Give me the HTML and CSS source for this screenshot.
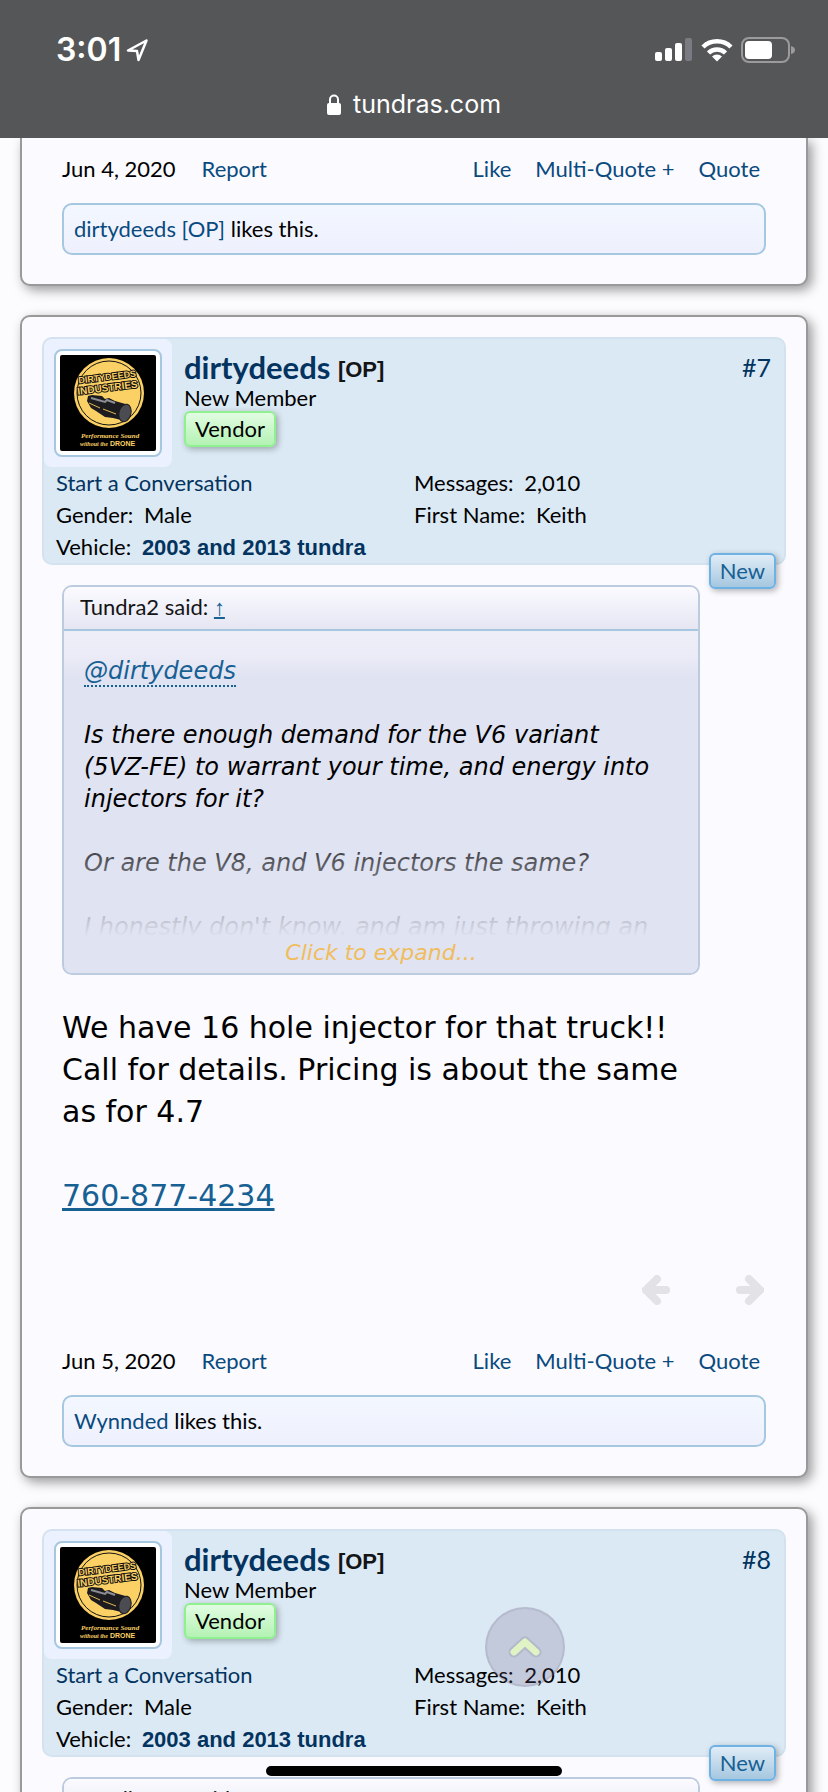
FILE: index.html
```html
<!DOCTYPE html>
<html lang="en">
<head>
    <meta charset="UTF-8">
    <meta name="viewport" content="width=device-width, initial-scale=1.0">
    <title>tundras.com</title>
    <link rel="stylesheet" href="styles.css">
</head>
<body>
    <svg class="sprite" width="0" height="0" aria-hidden="true">
        <symbol id="logo" viewBox="0 0 96 96">
            <rect width="96" height="96" rx="2" fill="#000"/>
            <circle cx="49" cy="38" r="35" fill="#fbd065"/>
            <circle cx="49" cy="38" r="32" fill="none" stroke="#111" stroke-width="1"/>
            <g transform="rotate(-7 48 29)" font-family="Liberation Sans, sans-serif" font-weight="bold" text-anchor="middle" fill="#fbd065" stroke="#111" stroke-width="2" paint-order="stroke">
                <text x="48" y="25" font-size="9">DIRTYDEEDS</text>
                <text x="47" y="36" font-size="10">INDUSTRIES</text>
            </g>
            <path d="M28 41l4-1 10 1 3 3 4-1 6 3 14 4-4 16-12-3-8-1-9-6-5-3-4-7z" fill="#1c1c20"/>
            <path d="M31 43l14 4 2-2 8 3" fill="none" stroke="#8d8d94" stroke-width="2"/>
            <path d="M29 48l11 5M43 54l13 5" fill="none" stroke="#e0b84e" stroke-width="1"/>
            <ellipse cx="65" cy="58" rx="6" ry="9" transform="rotate(14 65 58)" fill="#4b4b52" stroke="#1c1c20"/>
            <g font-family="Liberation Serif, serif" font-style="italic" font-weight="bold" fill="#fbd065">
                <text x="21" y="83" font-size="7">Performance Sound</text>
                <text x="20" y="91" font-size="6">without the</text>
            </g>
            <text x="50" y="91" font-family="Liberation Sans, sans-serif" font-weight="bold" font-size="7" fill="#fbd065">DRONE</text>
        </symbol>
    </svg>

    <header class="browser-bar">
        <div class="status">
            <div class="clock">
                <span>3:01</span>
                <svg width="24" height="24" viewBox="0 0 24 24" fill="none" stroke="#fff" stroke-width="2.500" stroke-linejoin="round"><path d="M21.500 2.500L3 12.500l9 .5 1.500 9z"/></svg>
            </div>
            <div class="signals">
                <svg width="38" height="24" viewBox="0 0 38 24" fill="#fff">
                    <rect x="0" y="14" width="7" height="9" rx="2"/>
                    <rect x="10" y="10" width="7" height="13" rx="2"/>
                    <rect x="20" y="5" width="7" height="18" rx="2"/>
                    <rect x="30" y="0" width="7" height="23" rx="2" fill="#7a7a82"/>
                </svg>
                <svg width="32" height="24" viewBox="0 0 32 24" fill="none" stroke="#fff" stroke-width="4.500">
                    <path d="M2 9a20 20 0 0 1 28 0"/>
                    <path d="M7.500 15a12 12 0 0 1 17 0"/>
                    <path d="M16 23.500l-5-5a7 7 0 0 1 10 0z" fill="#fff" stroke="none"/>
                </svg>
                <svg width="54" height="26" viewBox="0 0 54 26">
                    <rect x="1" y="1" width="47" height="24" rx="7" fill="none" stroke="#9b9b9e" stroke-width="2"/>
                    <rect x="4" y="4" width="27" height="18" rx="4" fill="#fff"/>
                    <path d="M50 9q4 1 4 4t-4 4z" fill="#9b9b9e"/>
                </svg>
            </div>
        </div>
        <div class="address">
            <svg width="14" height="21" viewBox="0 0 14 21"><rect y="9" width="14" height="12" rx="2" fill="#fff"/><path d="M3 10V5.500a4 4 0 0 1 8 0V10" fill="none" stroke="#fff" stroke-width="2"/></svg>
            <span>tundras.com</span>
        </div>
    </header>

    <main class="thread">
        <article class="post post-cut">
            <footer class="post-meta">
                <span>Jun 4, 2020</span>
                <a href="#">Report</a>
                <nav class="post-actions">
                    <a href="#">Like</a>
                    <a href="#">Multi-Quote +</a>
                    <a href="#">Quote</a>
                </nav>
            </footer>
            <div class="likes"><a href="#">dirtydeeds [OP]</a> likes this.</div>
        </article>

        <article class="post">
            <section class="user">
                <div class="user-top">
                    <div class="avatar"><a href="#"><svg width="96" height="96"><use href="#logo"/></svg></a></div>
                    <div class="who">
                        <h3><a href="#">dirtydeeds</a> <b>[OP]</b></h3>
                        <div class="rank">New Member</div>
                        <span class="vendor">Vendor</span>
                    </div>
                    <a class="number" href="#">#7</a>
                </div>
                <div class="user-info">
                    <div>
                        <p><a href="#">Start a Conversation</a></p>
                        <p>Gender: <span>Male</span></p>
                        <p>Vehicle: <span class="vehicle">2003 and 2013 tundra</span></p>
                    </div>
                    <div>
                        <p>Messages: <span>2,010</span></p>
                        <p>First Name: <span>Keith</span></p>
                    </div>
                </div>
                <strong class="new">New</strong>
            </section>

            <div class="content">
                <blockquote class="quote">
                    <div class="quote-head">Tundra2 said: <a href="#">↑</a></div>
                    <div class="quote-body">
                        <div class="quote-text">
                            <p><a href="#">@dirtydeeds</a></p>
                            <p>Is there enough demand for the V6 variant <span class="engine">(5VZ-FE)</span> to warrant your time, and energy into injectors for it?</p>
                            <p>Or are the V8, and V6 injectors the same?</p>
                            <p>I honestly don't know, and am just throwing an</p>
                        </div>
                        <button class="expand" type="button">Click to expand...</button>
                    </div>
                </blockquote>
                <div class="message">
                    <p>We have 16 hole injector for that truck!! Call for details. Pricing is about the same as for 4.7</p>
                    <p><a href="#">760-877-4234</a></p>
                </div>
            </div>

            <div class="arrows">
                <a href="#" aria-label="Previous"><svg width="28" height="30" viewBox="0 0 28 30"><path d="M15 4L4 15l11 11M5 15h19" /></svg></a>
                <a href="#" aria-label="Next"><svg width="28" height="30" viewBox="0 0 28 30"><path d="M13 4l11 11-11 11M23 15H4"/></svg></a>
            </div>
            <footer class="post-meta">
                <span>Jun 5, 2020</span>
                <a href="#">Report</a>
                <nav class="post-actions">
                    <a href="#">Like</a>
                    <a href="#">Multi-Quote +</a>
                    <a href="#">Quote</a>
                </nav>
            </footer>
            <div class="likes"><a href="#">Wynnded</a> likes this.</div>
        </article>

        <article class="post">
            <section class="user">
                <div class="user-top">
                    <div class="avatar"><a href="#"><svg width="96" height="96"><use href="#logo"/></svg></a></div>
                    <div class="who">
                        <h3><a href="#">dirtydeeds</a> <b>[OP]</b></h3>
                        <div class="rank">New Member</div>
                        <span class="vendor">Vendor</span>
                    </div>
                    <a class="number" href="#">#8</a>
                </div>
                <div class="user-info">
                    <div>
                        <p><a href="#">Start a Conversation</a></p>
                        <p>Gender: <span>Male</span></p>
                        <p>Vehicle: <span class="vehicle">2003 and 2013 tundra</span></p>
                    </div>
                    <div>
                        <p>Messages: <span>2,010</span></p>
                        <p>First Name: <span>Keith</span></p>
                    </div>
                </div>
                <strong class="new">New</strong>
            </section>
            <div class="content">
                <blockquote class="quote">
                    <div class="quote-head">Rowllerons said:</div>
                </blockquote>
            </div>
        </article>
    </main>

    <button class="to-top" type="button" aria-label="Back to top">
        <svg width="34" height="26" viewBox="0 0 34 26" fill="none" stroke-linejoin="round" stroke-linecap="round">
            <path d="M6 18L17 8l11 10" stroke="#b4b8cb" stroke-width="11"/>
            <path d="M6 18L17 8l11 10" stroke="#dff3c4" stroke-width="7"/>
        </svg>
    </button>
    <div class="home-bar"></div>
</body>
</html>
```
FILE: styles.css
```css
* {
    box-sizing: border-box;
}
body {
    display: flex;
    flex-direction: column;
    height: 100vh;
    margin: 0;
    overflow: hidden;
    background: #fcfcff;
    color: #000;
    font-family: Lato, "Trebuchet MS", sans-serif;
    font-size: 22px;
    line-height: 32px;
}
h3, p, blockquote {
    margin: 0;
}
a {
    color: #0a4a7e;
    text-decoration: none;
}
svg {
    display: block;
}
.sprite {
    position: absolute;
}

/* browser bar */
.browser-bar {
    flex: none;
    height: 138px;
    padding-top: 30px;
    background: #555658;
    color: #fff;
    font-family: Inter, sans-serif;
}
.status {
    display: flex;
    justify-content: space-between;
    align-items: center;
    height: 40px;
    padding: 0 33px 0 56px;
}
.clock, .signals {
    display: flex;
    align-items: center;
    gap: 8px;
}
.clock {
    gap: 4px;
    font-size: 32px;
    font-weight: 600;
}
.address {
    display: flex;
    justify-content: center;
    align-items: center;
    gap: 12px;
    margin-top: 18px;
    font-size: 25px;
}

/* posts */
.thread {
    flex: 1;
    min-height: 0;
    overflow: hidden;
}
.post {
    margin: 0 20px 29px;
    padding: 20px 20px 29px;
    border: 2px solid #999;
    border-radius: 10px;
    background: #fafaff;
    box-shadow: 4px 4px 12px rgba(0, 0, 0, 0.4);
}
.post-cut {
    padding-top: 15px;
    border-top: 0;
    border-radius: 0 0 10px 10px;
}
.user {
    position: relative;
    height: 228px;
    border: 2px solid #d4e2ef;
    border-radius: 10px;
    background: #dbe9f4;
}
.user a {
    color: #03335f;
}
.user-top {
    display: flex;
    height: 128px;
}
.avatar {
    width: 128px;
    height: 128px;
    padding: 10px;
    border-radius: 8px;
    background: #ebf1ff;
}
.avatar a {
    display: block;
    padding: 4px;
    border: 2px solid #a5c7e0;
    border-radius: 8px;
    background: #fff;
}
.who {
    flex: 1;
    padding: 10px 0 0 12px;
}
.who h3 {
    font-size: 31px;
    line-height: 36px;
}
.who b {
    color: #141414;
    font: bold 22px "Liberation Sans", sans-serif;
    vertical-align: 2px;
}
.rank {
    line-height: 26px;
}
.vendor, .new {
    display: inline-block;
    height: 36px;
    padding: 0 9px;
    border: 2px solid #8ff08f;
    border-radius: 6px;
    background: linear-gradient(#e2fce2, #b4f2b4);
    box-shadow: 2px 2px 6px rgba(0, 0, 0, 0.3);
}
.new {
    position: absolute;
    right: 8px;
    bottom: -26px;
    border-color: #6cb2e4;
    background: linear-gradient(#e0ecf6, #a5c7e0);
    color: #176093;
    font-weight: normal;
}
.number {
    padding: 12px 13px 0 0;
    font-size: 25px;
}
.user-info {
    display: grid;
    grid-template-columns: 1fr 1fr;
}
.user-info > div {
    padding-left: 12px;
}
.user-info > div + div {
    padding-left: 0;
}
.user-info span {
    margin-left: 5px;
}
.user-info .vehicle {
    color: #03335f;
    font: bold 22px "Liberation Sans", sans-serif;
}

.content {
    padding: 20px 86px 0 20px;
}
.quote {
    border: 2px solid #bccbe0;
    border-radius: 10px;
    overflow: hidden;
    background: #e0e3f2;
}
.quote-head {
    height: 44px;
    padding: 4px 16px;
    border-bottom: 2px solid #a5c7e0;
    background: linear-gradient(#fafaff, #e6e6f3);
    color: #141414;
}
.quote-head a {
    color: #176093;
    font-family: "Liberation Serif", serif;
    text-decoration: underline;
}
.quote-body {
    padding: 24px 20px 4px;
    background: linear-gradient(#efeff8, #ebebf7 26px, #e0e3f2 46px);
    font-family: "DejaVu Sans", Verdana, sans-serif;
    font-style: italic;
}
.quote-text {
    position: relative;
    height: 282px;
    overflow: hidden;
    font-size: 24px;
}
.quote-text::after {
    content: "";
    position: absolute;
    inset: 160px 0 0;
    background: linear-gradient(rgba(224, 227, 242, 0), #e0e3f2);
}
.quote-text p {
    margin-bottom: 32px;
}
.quote-text p:last-child {
    margin-bottom: 0;
}
.quote-text a {
    border-bottom: 2px dotted #176093;
    color: #176093;
}
.engine {
    white-space: nowrap;
}
.expand {
    display: block;
    width: 100%;
    height: 32px;
    padding: 0;
    border: 0;
    background: none;
    color: #f0bd5c;
    font: inherit;
    text-align: center;
}
.message {
    padding-top: 32px;
    font-family: "DejaVu Sans", Verdana, sans-serif;
    font-size: 30px;
    line-height: 42px;
}
.message p + p {
    margin-top: 42px;
}
.message a {
    color: #176093;
    text-decoration: underline;
}
.arrows {
    display: flex;
    justify-content: flex-end;
    gap: 66px;
    margin: 58px 22px 40px 0;
}
.arrows path {
    fill: none;
    stroke: #e2e2e7;
    stroke-width: 8px;
    stroke-linecap: round;
}
.post-meta {
    display: flex;
    gap: 26px;
    margin: 0 26px 0 20px;
}
.post-actions {
    display: flex;
    gap: 24px;
    margin-left: auto;
}
.likes {
    margin: 18px 20px 0;
    padding: 8px 10px;
    border: 2px solid #a5c7e0;
    border-radius: 10px;
    background: linear-gradient(#f3f7ff, #eef1fd);
}

/* floating things */
.to-top {
    position: fixed;
    right: 263px;
    bottom: 105px;
    display: grid;
    place-items: center;
    width: 80px;
    height: 80px;
    padding: 0;
    border: 2px solid rgba(110, 100, 130, 0.15);
    border-radius: 50%;
    background: rgba(110, 90, 130, 0.22);
}
.home-bar {
    position: fixed;
    left: 50%;
    bottom: 16px;
    width: 296px;
    height: 10px;
    border-radius: 5px;
    background: #000;
    transform: translateX(-50%);
}
```
